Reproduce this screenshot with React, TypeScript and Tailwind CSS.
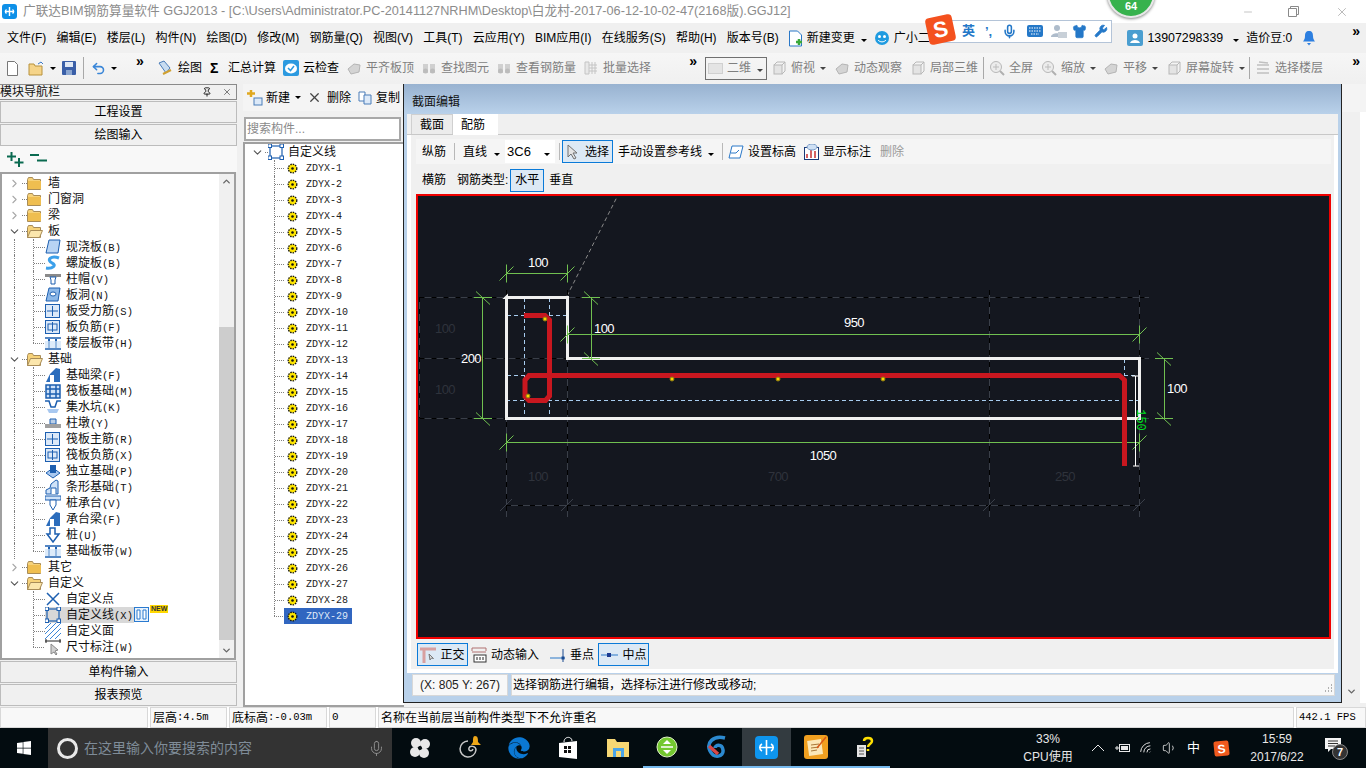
import { ChevronDown, ChevronRight, ChevronUp, Mic, Minus, Pin, Shirt, Undo2, Volume1, Wifi, Wrench, X } from "lucide-react";
import { FaEdge, FaWindows } from "react-icons/fa";
import type { ReactNode } from "react";

const Caret = () => <span className="mx-[5px] inline-block h-0 w-0 border-x-[3px] border-t-[3px] border-x-transparent border-t-black" />;

const CaretTight = () => <span className="mx-px inline-block h-0 w-0 border-x-[3px] border-t-[3px] border-x-transparent border-t-[#444]" />;

const More = () => <span className="text-[14px] leading-none font-bold tracking-[-1px] text-black">»</span>;

const Sep = () => <div className="h-[22px] w-px bg-[#a8a8a8]" />;

const menus = ["文件(F)", "编辑(E)", "楼层(L)", "构件(N)", "绘图(D)", "修改(M)", "钢筋量(Q)", "视图(V)", "工具(T)", "云应用(Y)", "BIM应用(I)", "在线服务(S)", "帮助(H)", "版本号(B)"];

const GrayIcon = ({ kind = 0 }: { kind?: number }) => (
  <svg width="16" height="16" viewBox="0 0 16 16" className="shrink-0">
    {kind === 0 && <path d="M2 9l6-5 6 1-1 7-8 2z" fill="#d4d4d4" stroke="#b4b4b4" />}
    {kind === 1 && <><circle cx="7" cy="7" r="5.5" fill="#ececec" stroke="#b8b8b8" /><path d="M11 11l4 4" stroke="#b0b0b0" strokeWidth="2" /><path d="M7 4v6M4 7h6" stroke="#bcbcbc" /></>}
    {kind === 2 && <><rect x="3" y="5" width="8" height="9" fill="#e4e4e4" stroke="#b8b8b8" /><path d="M3 5l3-3h8v9l-3 3M11 5l3-3" fill="none" stroke="#b8b8b8" /></>}
    {kind === 3 && <><path d="M2 4h5v9H2zM9 4h5v9H9z" fill="#d0d0d0" /><circle cx="4.5" cy="11" r="2.5" fill="#bcbcbc" /><circle cx="11.5" cy="11" r="2.5" fill="#bcbcbc" /></>}
    {kind === 4 && <path d="M2 2h4v12H2zM6 5h8M6 8h8M6 11h8M9 2v12M12 2v12" fill="#e8e8e8" stroke="#c4c4c4" />}
    {kind === 5 && <path d="M2 5h12M2 9h12M2 13h12M4 2l9 1" stroke="#c0c0c0" strokeWidth="1.6" />}
  </svg>
);

const ToolItem = ({ icon, label, caret }: { icon?: ReactNode; label: string; caret?: boolean }) => (
  <div className="flex items-center gap-1 whitespace-nowrap text-[#7f7f7f]">
    {icon}
    <span>{label}</span>
    {caret && <CaretTight />}
  </div>
);

const TitleBar = () => (
  <div className="flex h-[23px] items-center bg-white">
    <div className="ml-[2px] flex h-[15px] w-[15px] items-center justify-center rounded-[3px] bg-[#0e90e8]">
      <svg width="11" height="11" viewBox="0 0 11 11"><path d="M5.5 1v9M1 5.5h9M2.5 3.5C1 4.5 1 6.500 2.500 7.500M8.500 3.500C10 4.500 10 6.500 8.500 7.500" fill="none" stroke="#fff" strokeWidth="1.400" /></svg>
    </div>
    <span className="ml-[6px] text-[12.700px] whitespace-nowrap text-[#8c8c8c]">广联达BIM钢筋算量软件 GGJ2013 - [C:\Users\Administrator.PC-20141127NRHM\Desktop\白龙村-2017-06-12-10-02-47(2168版).GGJ12]</span>
    <div className="ml-auto flex items-center text-[#8a8a8a]">
      <Minus size={12} strokeWidth={1} className="mr-[34px]" />
      <svg width="11" height="11" viewBox="0 0 11 11" className="mr-[36px]"><path d="M.5 2.500h8v8h-8zM2.500 2.500v-2h8v8h-2" fill="none" stroke="#8a8a8a" /></svg>
      <X size={14} strokeWidth={1} className="mr-[17px]" />
    </div>
  </div>
);

const MenuBar = () => (
  <div className="flex h-[30px] items-center bg-[#f0f0f0] pl-[7px] text-black">
    <div className="flex gap-[10.200px] whitespace-nowrap">
      {menus.map((m) => <span key={m}>{m}</span>)}
    </div>
    <svg width="15" height="17" viewBox="0 0 15 17" className="ml-[9px]">
      <path d="M1.500 1h8l4 4v11h-12z" fill="#fff" stroke="#2a78c8" />
      <path d="M8 12h6M11 9v6" stroke="#3aa83a" strokeWidth="2.500" />
    </svg>
    <span className="ml-1">新建变更</span>
    <span className="ml-px"><Caret /></span>
    <svg width="16" height="16" viewBox="0 0 16 16" className="ml-[2px]">
      <circle cx="8" cy="8" r="7" fill="#1f9be0" />
      <circle cx="5.500" cy="6.500" r="1.500" fill="#fff" />
      <circle cx="10.500" cy="6.500" r="1.500" fill="#fff" />
      <path d="M4 10c2 2.500 6 2.500 8 0" fill="none" stroke="#fff" />
    </svg>
    <span className="ml-1">广小二</span>
    <div className="ml-auto flex items-center">
      <div className="flex h-[16px] w-[16px] items-center justify-center rounded-[2px] bg-[#4a9ed0]">
        <svg width="12" height="12" viewBox="0 0 12 12"><circle cx="6" cy="4" r="2.500" fill="#fff" /><path d="M1 11c1-4 9-4 10 0z" fill="#fff" /></svg>
      </div>
      <span className="ml-1 text-[12.400px]">13907298339</span>
      <span className="ml-[5px]"><Caret /></span>
      <span className="ml-[2px]">造价豆:0</span>
      <svg width="14" height="16" viewBox="0 0 14 16" className="ml-[10px]">
        <path d="M7 1c3 0 4 2 4 5 0 3 1 4 2 5.500H1C2 10 3 9 3 6c0-3 1-5 4-5z" fill="#2d7fe0" />
        <path d="M5 13h4l-2 2.500z" fill="#2d7fe0" />
      </svg>
      <span className="mr-[7px] ml-9 -mt-3"><More /></span>
    </div>
  </div>
);

const ToolBar = () => (
  <div className="flex h-[30px] items-center bg-gradient-to-b from-[#f6f6f6] to-[#f0f0f0] text-black">
    <div className="flex w-[152px] items-center pl-[6px]">
      <svg width="13" height="15" viewBox="0 0 13 15"><path d="M1.500.5h7l3 3v11h-10z" fill="#fff" stroke="#777" /></svg>
      <svg width="17" height="15" viewBox="0 0 17 15" className="ml-[9px]"><path d="M1 3h5l1 2h7v9H1z" fill="#f5d48a" stroke="#b8923c" /><path d="M10 3l3-2 2 2" fill="none" stroke="#3a78c8" /></svg>
      <Caret />
      <svg width="14" height="14" viewBox="0 0 14 14" className="ml-[1px]"><rect width="14" height="14" rx="1" fill="#3a5fa8" /><rect x="3" y="1" width="8" height="5" fill="#dfe8f5" /><rect x="4" y="9" width="6" height="5" fill="#8ba6d0" /></svg>
      <div className="mx-[7px]"><Sep /></div>
      <Undo2 size={15} strokeWidth={2.500} className="text-[#3a86d8]" />
      <Caret />
      <span className="ml-[14px] -mt-3"><More /></span>
    </div>
    <div className="flex w-[552px] items-center gap-[7px] pl-[5px]">
      <div className="flex items-center gap-[5px] whitespace-nowrap">
        <svg width="16" height="16" viewBox="0 0 16 16"><path d="M2 3l5-2 6 7-4 5z" fill="#c8dcf0" stroke="#4a7cb8" /><path d="M6 14l8-4" stroke="#d0a030" strokeWidth="2" /></svg>
        <span>绘图</span>
      </div>
      <div className="ml-[1px] flex items-center gap-2 whitespace-nowrap">
        <span className="w-[10px] text-[14px] leading-none font-bold">Σ</span>
        <span>汇总计算</span>
      </div>
      <div className="flex items-center gap-1 whitespace-nowrap">
        <svg width="16" height="16" viewBox="0 0 16 16"><rect width="16" height="16" rx="2" fill="#2c9ae0" /><ellipse cx="8" cy="8.500" rx="6" ry="5" fill="#fff" /><path d="M5 8l2.500 2.500L11 6" fill="none" stroke="#2c9ae0" strokeWidth="1.500" /></svg>
        <span>云检查</span>
      </div>
      <ToolItem icon={<GrayIcon />} label="平齐板顶" />
      <ToolItem icon={<GrayIcon kind={3} />} label="查找图元" />
      <ToolItem icon={<GrayIcon kind={3} />} label="查看钢筋量" />
      <ToolItem icon={<GrayIcon kind={4} />} label="批量选择" />
      <span className="ml-auto mr-[8px] -mt-3"><More /></span>
    </div>
    <div className="flex flex-1 items-center pl-[1px]">
      <div className="flex h-[23px] w-[62px] items-center whitespace-nowrap border border-[#707070] pl-[2px] text-[#7f7f7f]">
        <div className="mr-1 h-[11px] w-[15px] shrink-0 border border-[#d0d0d0] bg-[#e4e4e4]" />
        <span>二维</span>
        <span className="ml-[5px]"><CaretTight /></span>
      </div>
      <div className="ml-[4px]"><ToolItem icon={<GrayIcon kind={2} />} label="俯视" caret /></div>
      <div className="ml-[7px]"><ToolItem icon={<GrayIcon />} label="动态观察" /></div>
      <div className="ml-2"><ToolItem icon={<GrayIcon kind={2} />} label="局部三维" /></div>
      <div className="mx-[5px]"><Sep /></div>
      <ToolItem icon={<GrayIcon kind={1} />} label="全屏" />
      <div className="ml-2"><ToolItem icon={<GrayIcon kind={1} />} label="缩放" caret /></div>
      <div className="ml-[6px]"><ToolItem icon={<GrayIcon />} label="平移" caret /></div>
      <div className="ml-[7px]"><ToolItem icon={<GrayIcon kind={2} />} label="屏幕旋转" caret /></div>
      <div className="ml-[3px]"><Sep /></div>
      <div className="ml-[5px]"><ToolItem icon={<GrayIcon kind={5} />} label="选择楼层" /></div>
      <span className="mr-[7px] ml-auto -mt-3"><More /></span>
    </div>
  </div>
);

const ChevronClosed = () => <ChevronRight size={13} strokeWidth={2} className="text-[#a8a8a8]" />;
const ChevronOpen = () => <ChevronDown size={13} strokeWidth={2} className="text-[#555]" />;

const Folder = ({ open }: { open?: boolean }) => (
  <svg width="16" height="13" viewBox="0 0 16 13" className="shrink-0">
    <path d="M.5 2.500l1-2h4l1 2h7v10H.5z" fill="#f6d27a" stroke="#a88c58" />
    {open ? <path d="M.5 12.500l3-7h12l-3 7z" fill="#fbe6ac" stroke="#a88c58" /> : <rect x="1" y="4" width="13" height="8" fill="#efbe50" />}
  </svg>
);

const BLUE = "#1d5fb0";

const TreeIcon = ({ v }: { v: string }) => (
  <svg width="16" height="16" viewBox="0 0 16 16" className="shrink-0">
    {v === "plate" && <path d="M4 1h11l-2 13H1z" fill="#b8d4f4" stroke={BLUE} />}
    {v === "spiral" && <path d="M14 3C6 0 1 5 7 8c5 2 1 6-6 5" fill="none" stroke="#3ca0ea" strokeWidth="3" />}
    {v === "cap" && <><rect x="0" y="3" width="16" height="3" fill="#8a8a8a" /><path d="M5 6h6l-1 3v4H6V9z" fill="#fff" stroke={BLUE} /></>}
    {v === "hole" && <><path d="M4 1h11l-2 13H1z" fill="#8cb8e8" stroke={BLUE} /><ellipse cx="8" cy="7" rx="3" ry="2" fill="#fff" stroke={BLUE} /></>}
    {v === "mesh" && <><rect x=".5" y="1.500" width="14" height="13" fill="#dce9f8" stroke={BLUE} /><path d="M2 8h11M7.500 3v10" stroke={BLUE} /></>}
    {v === "mesh2" && <><rect x=".5" y="1.500" width="14" height="13" fill="#dce9f8" stroke={BLUE} /><rect x="3" y="5" width="9" height="6" fill="none" stroke={BLUE} /><path d="M7.500 3v10" stroke={BLUE} /></>}
    {v === "band" && <><path d="M0 3h16M0 14h16" stroke={BLUE} strokeWidth="1.500" /><path d="M4 4v9M11 4v9" stroke={BLUE} strokeWidth="2" /><rect x="0" y="6" width="16" height="7" fill="#cfe2f8" opacity=".7" /></>}
    {v === "beam" && <><path d="M1 15l4-8 6-6 4 1v13z" fill="#2c6dbc" /><path d="M5 8h4v7H5z" fill="#fff" /></>}
    {v === "raft" && <path d="M1 2h14v13H1zM1 6h14M1 11h14M5 2v13M11 2v13" fill="#cfe2f8" stroke={BLUE} strokeWidth="1.500" />}
    {v === "pit" && <><path d="M0 2h4l2 6h4l2-6h4" fill="none" stroke={BLUE} strokeWidth="1.500" /><path d="M2 10h12l-2 4H4z" fill="#a8c8f0" /></>}
    {v === "pier" && <><path d="M5 4h6v5H5z" fill="#bcd0e8" stroke={BLUE} /><rect x="0" y="9" width="16" height="4" fill="#a0a0a0" /></>}
    {v === "found" && <><path d="M1 10l7-5 7 5-7 5z" fill="#a8c8f0" stroke={BLUE} /><path d="M5 2h6v8H5z" fill={BLUE} /></>}
    {v === "strip" && <><path d="M1 15V11l4-2 1-4 5-4 2 1v13z" fill="#cfe2f8" stroke={BLUE} /><path d="M6 15V9h5v6" fill="#fff" stroke={BLUE} /></>}
    {v === "pile" && <><rect x="0" y="1" width="16" height="4" fill="#cfe2f8" stroke={BLUE} /><path d="M5 5h6v5l-3 5-3-5z" fill="#fff" stroke={BLUE} /></>}
    {v === "pile2" && <path d="M5 1h5v6h4l-6 8-6-8h3z" fill="#fff" stroke={BLUE} strokeWidth="1.500" />}
    {v === "point" && <path d="M2 2l12 12M14 2L2 14" stroke={BLUE} strokeWidth="1.500" />}
    {v === "line" && <><rect x="2" y="2" width="12" height="12" fill="none" stroke={BLUE} strokeWidth="1.200" />{[[0, 0], [12, 0], [0, 12], [12, 12]].map(([x, y]) => <rect key={`${x}${y}`} x={x} y={y} width="3.500" height="3.500" fill="#fff" stroke={BLUE} />)}</>}
    {v === "hatch" && <path d="M0 6l6-6M0 11L11 0M0 16L16 0M5 16L16 5M10 16l6-6" stroke="#3a86d8" />}
    {v === "dim" && <><path d="M0 2h16M1 0v4M15 0v4" stroke="#222" /><path d="M6 5v10l3-2 2 3 1-1-2-3 3-1z" fill="#d0d0d0" stroke="#888" /></>}
  </svg>
);

const Dotted = "border-[#808080] border-dotted";

const Guides = ({ last, outer = true }: { last?: boolean; outer?: boolean }) => (
  <div className="flex h-full shrink-0">
    <div className={`ml-[12px] h-full w-[19px] ${outer ? `border-l ${Dotted}` : ""}`} />
    <div className={`relative h-full w-[12px] ${last ? "" : `border-l ${Dotted}`}`}>
      {last && <div className={`h-1/2 border-l ${Dotted}`} />}
      <div className={`absolute top-1/2 left-0 w-[11px] border-t ${Dotted}`} />
    </div>
  </div>
);

const Group = ({ name, open }: { name: string; open?: boolean }) => (
  <div className="flex h-4 items-center pl-[6px]">
    {open ? <ChevronOpen /> : <ChevronClosed />}
    <div className={`ml-[1px] w-[5px] border-t ${Dotted}`} />
    <Folder open={open} />
    <span className="ml-[5px]">{name}</span>
  </div>
);

const Leaf = ({ name, k, v, last, outer, extra, selected }: { name: string; k?: string; v: string; last?: boolean; outer?: boolean; extra?: ReactNode; selected?: boolean }) => (
  <div className="flex h-4 items-center">
    <Guides last={last} outer={outer} />
    <div className={`flex h-4 items-center gap-1 pr-[1px] ${selected ? "bg-[#d8d8d8]" : ""}`}>
      <TreeIcon v={v} />
      <span className="ml-[1px] whitespace-nowrap">
        {name}
        {k && <span className="font-['Liberation_Mono',monospace] text-[10.500px]">({k})</span>}
      </span>
    </div>
    {extra}
  </div>
);

const slabs: [string, string, string][] = [["现浇板", "B", "plate"], ["螺旋板", "B", "spiral"], ["柱帽", "V", "cap"], ["板洞", "N", "hole"], ["板受力筋", "S", "mesh"], ["板负筋", "F", "mesh2"], ["楼层板带", "H", "band"]];
const founds: [string, string, string][] = [["基础梁", "F", "beam"], ["筏板基础", "M", "raft"], ["集水坑", "K", "pit"], ["柱墩", "Y", "pier"], ["筏板主筋", "R", "mesh"], ["筏板负筋", "X", "mesh2"], ["独立基础", "P", "found"], ["条形基础", "T", "strip"], ["桩承台", "V", "pile"], ["承台梁", "F", "beam"], ["桩", "U", "pile2"], ["基础板带", "W", "band"]];

const NavButton = ({ label }: { label: string }) => (
  <div className="flex h-[22px] items-center justify-center border border-[#bcbcbc] bg-[#f0f0f0] text-black">{label}</div>
);

const NavPanel = () => (
  <div className="flex w-[237px] shrink-0 flex-col">
    <div className="flex h-[16px] items-center justify-between border-y border-r border-[#8a8a8a] bg-[#f0f0f0] pr-1 text-[#111]">
      <span>模块导航栏</span>
      <div className="flex items-center gap-[10px]">
        <Pin size={10} strokeWidth={2} className="text-black" />
        <X size={10} strokeWidth={1.500} className="text-[#333]" />
      </div>
    </div>
    <div className="mt-[1px] flex flex-col gap-px">
      <NavButton label="工程设置" />
      <NavButton label="绘图输入" />
    </div>
    <div className="flex h-[26px] items-center gap-[6px] bg-[#f8f8f8] pl-[7px]">
      <svg width="17" height="15" viewBox="0 0 17 15"><path d="M4.500 0v9M0 4.500h9M12 6v9M7.500 10.500h9" stroke="#0a6a50" strokeWidth="2" /></svg>
      <svg width="17" height="15" viewBox="0 0 17 15"><path d="M0 3h9M7 8.500h10" stroke="#0a6a50" strokeWidth="2" /></svg>
    </div>
    <div className="mr-px flex h-[488px] border-2 border-[#a0a0a0] bg-white text-[#111]">
      <div className="min-w-0 flex-1 pt-[1px]">
        {["墙", "门窗洞", "梁"].map((g) => <Group key={g} name={g} />)}
        <Group name="板" open />
        {slabs.map(([n, k, v], i) => <Leaf key={n} name={n} k={k} v={v} last={i === slabs.length - 1} />)}
        <Group name="基础" open />
        {founds.map(([n, k, v], i) => <Leaf key={n + k} name={n} k={k} v={v} last={i === founds.length - 1} />)}
        <Group name="其它" />
        <Group name="自定义" open />
        <Leaf name="自定义点" v="point" outer={false} />
        <Leaf
          name="自定义线"
          k="X"
          v="line"
          outer={false}
          selected
          extra={
            <div className="flex h-4 items-start">
              <svg width="15" height="15" viewBox="0 0 15 15"><rect x=".5" y=".5" width="14" height="14" fill="#e8f2fc" stroke="#2a7ad0" /><path d="M3 3v9h3V3zM9 3v9h3V3z" fill="#fff" stroke="#2a7ad0" /></svg>
              <span className="-mt-[2px] ml-[1px] bg-[#ffd800] px-[1px] text-[7px] leading-[8px] font-bold text-[#333]">NEW</span>
            </div>
          }
        />
        <Leaf name="自定义面" v="hatch" outer={false} />
        <Leaf name="尺寸标注" k="W" v="dim" outer={false} last />
      </div>
      <div className="flex w-[15px] shrink-0 flex-col bg-[#f0f0f0]">
        <div className="flex h-[15px] items-center justify-center"><ChevronUp size={11} strokeWidth={3} className="text-[#666]" /></div>
        <div className="mt-[138px] h-[313px] bg-[#cdcdcd]" />
        <div className="mt-auto flex h-[15px] items-center justify-center"><ChevronDown size={11} strokeWidth={3} className="text-[#666]" /></div>
      </div>
    </div>
    <div className="mt-[1px] flex flex-col gap-px">
      <NavButton label="单构件输入" />
      <NavButton label="报表预览" />
    </div>
  </div>
);

const Gear = () => (
  <svg width="11" height="11" viewBox="0 0 11 11" className="shrink-0">
    <circle cx="5.500" cy="5.500" r="4.300" fill="#ffe600" stroke="#111" strokeWidth="1.300" strokeDasharray="1.500 1" />
    <circle cx="5.500" cy="5.500" r="1.300" fill="#111" />
  </svg>
);

const CompPanel = () => (
  <div className="ml-[6px] flex w-[161px] shrink-0 flex-col">
    <div className="flex h-[27px] items-center bg-[#f4f4f4] text-black">
      <svg width="16" height="16" viewBox="0 0 16 16" className="ml-[4px]"><path d="M4 0v7M0 3.500h8" stroke="#e0a820" strokeWidth="2.500" /><rect x="7" y="8" width="8" height="7" fill="#dce9f8" stroke="#4a7cb8" /></svg>
      <span className="ml-[3px]">新建</span>
      <Caret />
      <X size={15} strokeWidth={2} className="ml-[1px] text-[#444]" />
      <span className="ml-[5px]">删除</span>
      <svg width="14" height="14" viewBox="0 0 14 14" className="ml-[7px]"><path d="M1 1h6v9H1z" fill="#fff" stroke="#4a7cb8" /><path d="M6 4h7v9H6z" fill="#dce9f8" stroke="#4a7cb8" /></svg>
      <span className="ml-1">复制</span>
    </div>
    <div className="mt-[6px] ml-[1px] flex h-[24px] w-[157px] items-center border-2 border-[#a8a8a8] bg-white pl-[1px] text-[#8a8a8a]">搜索构件...</div>
    <div className="mt-[1px] flex-1 border-2 border-r-0 border-[#a0a0a0] bg-white">
      <div className="flex h-4 items-center pl-[6px]">
        <ChevronOpen />
        <div className={`ml-[1px] w-[3px] border-t ${Dotted}`} />
        <TreeIcon v="line" />
        <span className="ml-[4px] text-[#111]">自定义线</span>
      </div>
      {Array.from({ length: 29 }, (_, i) => i + 1).map((n) => (
        <div key={n} className="flex h-4 items-center">
          <div className={`relative ml-[29px] h-full w-[10px] shrink-0 ${n === 29 ? "" : `border-l ${Dotted}`}`}>
            {n === 29 && <div className={`h-1/2 border-l ${Dotted}`} />}
            <div className={`absolute top-1/2 left-0 w-[9px] border-t ${Dotted}`} />
          </div>
          <div className={`flex h-4 items-center pr-1 pl-[3px] font-['Liberation_Mono',monospace] text-[10px] ${n === 29 ? "bg-[#3166c0] text-[#dfe8f8]" : "text-[#222]"}`}>
            <Gear />
            <span className="ml-[8px]">ZDYX-{n}</span>
          </div>
        </div>
      ))}
    </div>
  </div>
);

const Active = ({ children, w }: { children: ReactNode; w: string }) => (
  <div className={`flex h-[23px] items-center justify-center border border-[#0a7ad8] bg-[#dce9f5] ${w}`}>{children}</div>
);

const DIM = "#70c050";
const Hd = ({ x1, x2, y }: { x1: number; x2: number; y: number }) => <line x1={x1} x2={x2} y1={y} y2={y} stroke={DIM} />;
const Tick = ({ x, y, v }: { x: number; y: number; v?: boolean }) =>
  v ? (
    <g stroke={DIM}>
      <line x1={x} x2={x} y1={y - 9} y2={y + 9} />
      <line x1={x - 7} x2={x + 7} y1={y + 7} y2={y - 7} />
    </g>
  ) : (
    <g stroke={DIM}>
      <line x1={x - 9} x2={x + 9} y1={y} y2={y} />
      <line x1={x - 7} x2={x + 7} y1={y - 6} y2={y + 7} />
    </g>
  );

const Axis = ({ x1, y1, x2, y2 }: { x1: number; y1: number; x2: number; y2: number }) => (
  <g>
    <line x1={x1} y1={y1} x2={x2} y2={y2} stroke="#3a3f49" />
    <line x1={x1} y1={y1} x2={x2} y2={y2} stroke="#000" strokeDasharray="5 7" />
  </g>
);

const Helper = ({ x1, y1, x2, y2 }: { x1: number; y1: number; x2: number; y2: number }) => (
  <line x1={x1} y1={y1} x2={x2} y2={y2} stroke="#a8cdf0" strokeDasharray="4 3" />
);

const Label = ({ x, y, t, c = "#fff" }: { x: number; y: number; t: string; c?: string }) => (
  <text x={x} y={y} fill={c} textAnchor="middle" dominantBaseline="central" fontSize="13" letterSpacing="-.6" fontFamily="Liberation Sans, sans-serif">{t}</text>
);

const Drawing = () => (
  <svg viewBox="419 196 911 441" className="block h-full w-full">
    <line x1="568" y1="296" x2="618" y2="197" stroke="#8a8a8a" strokeDasharray="4 3" />
    <Axis x1={420.500} y1={297.500} x2={1150} y2={297.500} />
    <Axis x1={420.500} y1={358.500} x2={1150} y2={358.500} />
    <Axis x1={420.500} y1={418.500} x2={1150} y2={418.500} />
    <Axis x1={420.500} y1={297} x2={420.500} y2={418} />
    <Axis x1={507.500} y1={290} x2={507.500} y2={517} />
    <Axis x1={568.500} y1={290} x2={568.500} y2={517} />
    <Axis x1={990.500} y1={290} x2={990.500} y2={517} />
    <Axis x1={1140.500} y1={290} x2={1140.500} y2={517} />
    <Axis x1={507} y1={505.500} x2={1140} y2={505.500} />
    <g stroke="#3a3f49">
      {[507, 568, 990, 1140].map((x) => <line key={x} x1={x - 6} y1={511} x2={x + 6} y2={499} />)}
    </g>

    <Helper x1={525.500} y1={298} x2={525.500} y2={417} />
    <Helper x1={550.500} y1={298} x2={550.500} y2={417} />
    <Helper x1={508} y1={315.500} x2={568} y2={315.500} />
    <Helper x1={508} y1={375.500} x2={526} y2={375.500} />
    <Helper x1={507} y1={400.500} x2={1140} y2={400.500} />
    <Helper x1={1125.500} y1={359} x2={1125.500} y2={375} />
    <Helper x1={1125} y1={375.500} x2={1136} y2={375.500} />

    <path d="M507 297.500H568.500V358.500H1140.500V418.500H507.500V297z" fill="none" stroke="#f0f0f0" strokeWidth="3" />

    <Hd x1={507} x2={568} y={273.500} />
    <Tick x={507.500} y={273.500} v />
    <Tick x={568.500} y={273.500} v />
    <line x1={483.500} x2={483.500} y1={297} y2={418} stroke={DIM} />
    <Tick x={484} y={297.500} />
    <Tick x={484} y={418.500} />
    <line x1={592.500} x2={592.500} y1={297} y2={358} stroke={DIM} />
    <Tick x={592} y={297.500} />
    <Tick x={592} y={358.500} />
    <Hd x1={568} x2={1140} y={334.500} />
    <Tick x={568.500} y={334.500} v />
    <Tick x={1140.500} y={334.500} v />
    <Hd x1={507} x2={1140} y={442.500} />
    <Tick x={507.500} y={442.500} v />
    <Tick x={1140.500} y={442.500} v />
    <line x1={1165.500} x2={1165.500} y1={358} y2={418} stroke={DIM} />
    <Tick x={1165} y={358.500} />
    <Tick x={1165} y={418.500} />

    <path d="M525 315.500H546L550.500 320V396L546.500 400.500H530L526 396.500V380L530 375.500H1120.500L1125.500 380V466" fill="none" stroke="#c8171f" strokeWidth="5" />
    {[[546, 319], [529, 396], [673, 379], [779, 379], [884, 379]].map(([x, y]) => (
      <circle key={x} cx={x} cy={y} r="2" fill="#ffd400" stroke="#8a7a10" />
    ))}

    <line x1={1136.500} x2={1136.500} y1={376} y2={466} stroke="#fff" />
    <path d="M1133 376h6M1134 466h6" stroke="#fff" />

    <Label x={539} y={262} t="100" />
    <Label x={472} y={358} t="200" />
    <Label x={605} y={328} t="100" />
    <Label x={855} y={322} t="950" />
    <Label x={1178} y={388} t="100" />
    <Label x={824} y={455} t="1050" />
    <Label x={446} y={328} t="100" c="#2f333c" />
    <Label x={446} y={389} t="100" c="#2f333c" />
    <Label x={539} y={476} t="100" c="#2f333c" />
    <Label x={779} y={476} t="700" c="#2f333c" />
    <Label x={1066} y={476} t="250" c="#2f333c" />
    <text x={1141} y={420} fill="#00e020" textAnchor="middle" dominantBaseline="central" fontSize="12" fontFamily="Liberation Mono, monospace" transform="rotate(90 1141 420)">150</text>
  </svg>
);

const Dialog = () => (
  <div className="ml-[-1px] flex h-[619px] w-[939px] shrink-0 flex-col border-r border-b border-l border-[#222] bg-[#b9d1ea]">
    <div className="flex h-[30px] items-center bg-gradient-to-b from-[#98b2d0] to-[#b9d1ea] pt-[6px] pl-[8px] text-[#111]">截面编辑</div>
    <div className="mx-[3px] flex flex-col">
      <div className="flex h-[21px] items-end border-b border-[#c8c8c8] bg-[#f0f0f0] pl-[4px] text-black">
        <div className="flex h-[20px] w-[42px] items-center justify-center border border-b-0 border-[#d0d0d0] bg-[#ececec]">截面</div>
        <div className="-mb-px flex h-[21px] w-[45px] items-center justify-center bg-white pr-[5px]">配筋</div>
      </div>
    </div>
    <div className="mx-[3px] h-[538px] shrink-0 border-x-[4px] border-b-[4px] border-white bg-[#f0f0f0] pt-[4px] pr-[3px] pl-[5px] text-black">
      <div className="flex h-[25px] items-center bg-[#f5f5f5] pl-[6px]">
        <span>纵筋</span>
        <div className="mx-[8px] h-[17px] w-px bg-[#b8b8b8]" />
        <span>直线</span>
        <span className="ml-[2px]"><Caret /></span>
        <div className="flex h-[23px] w-[50px] items-center bg-white pl-[2px] text-[12px]">
          <span className="font-['Liberation_Sans',sans-serif] text-[13px]">3C6</span>
          <span className="ml-auto"><Caret /></span>
        </div>
        <div className="mr-[2px] ml-[4px] h-[17px] w-px bg-[#b8b8b8]" />
        <Active w="w-[51px]">
          <svg width="14" height="16" viewBox="0 0 14 16" className="mr-[5px]"><path d="M2 1v12l3-3 3 5 2-1-3-5h4z" fill="#e4e4e4" stroke="#707070" /></svg>
          选择
        </Active>
        <span className="ml-[5px]">手动设置参考线</span>
        <span className="ml-[1px]"><Caret /></span>
        <div className="mr-[5px] ml-[3px] h-[17px] w-px bg-[#b8b8b8]" />
        <svg width="16" height="14" viewBox="0 0 16 14"><path d="M4 1h11l-3 12H1z" fill="#fff" stroke="#2a78c8" /><path d="M3 8h5l3-3" fill="none" stroke="#2a78c8" /></svg>
        <span className="ml-1">设置标高</span>
        <svg width="15" height="16" viewBox="0 0 15 16" className="ml-[8px]"><rect x=".5" y="3.500" width="14" height="12" fill="#fff" stroke="#1a3a78" /><path d="M3 14v-4M7 14V6M11 14v-7" stroke="#c83030" strokeWidth="1.500" /><ellipse cx="8" cy="3" rx="5" ry="3" fill="#cfe0f4" stroke="#7a9cc8" /></svg>
        <span className="ml-1">显示标注</span>
        <span className="ml-[9px] text-[#9a9a9a]">删除</span>
      </div>
      <div className="mt-[4px] flex h-[24px] items-center pl-[6px]">
        <span>横筋</span>
        <span className="ml-[11px]">钢筋类型:</span>
        <div className="ml-[2px]"><Active w="w-[34px]">水平</Active></div>
        <span className="ml-[5px]">垂直</span>
      </div>
      <div className="mt-[2px] h-[445px] border-2 border-[#f00000] bg-[#14171f]">
        <Drawing />
      </div>
      <div className="mt-[3px] flex h-[25px] items-center pl-[1px]">
        <Active w="w-[51px]">
          <svg width="17" height="16" viewBox="0 0 17 16" className="mr-[3px]"><path d="M0 2h16M4 2v14" stroke="#d8a0a0" strokeWidth="3" /><path d="M9 7l1 6 1.500-2 2 .5z" fill="#ddd" stroke="#777" /></svg>
          正交
        </Active>
        <div className="ml-[3px] flex items-center gap-[3px]">
          <svg width="17" height="16" viewBox="0 0 17 16"><path d="M1 1h14M1 1v3M15 1v3M1 5h14" stroke="#b07070" /><rect x="3" y="8" width="12" height="7" fill="#fff" stroke="#333" /><path d="M6 10v3M9 10v3M12 10v3" stroke="#222" /></svg>
          <span>动态输入</span>
        </div>
        <div className="ml-[11px] flex items-center gap-[4px]">
          <svg width="16" height="14" viewBox="0 0 16 14"><path d="M0 10h15" stroke="#2a78c8" /><path d="M13 1v13" stroke="#1a4a90" /><rect x="11.500" y="8.500" width="3" height="3" fill="#1a4a90" /></svg>
          <span>垂点</span>
        </div>
        <div className="ml-[4px]">
          <Active w="w-[51px]">
            <svg width="17" height="6" viewBox="0 0 17 6" className="mr-[5px]"><path d="M0 3h17" stroke="#2a78c8" /><rect x="6" y="1" width="4" height="4" fill="#1a3a90" /></svg>
            中点
          </Active>
        </div>
      </div>
    </div>
    <div className="mt-[1px] mr-[6px] ml-[8px] flex h-[22px] gap-[3px] text-black">
      <div className="flex w-[96px] items-center justify-center border border-[#d8d8d8] bg-[#f8f8f8] text-[#222]">(X: 805 Y: 267)</div>
      <div className="relative flex flex-1 items-center border border-[#d8d8d8] bg-[#f8f8f8] pl-[1px]">
        选择钢筋进行编辑，选择标注进行修改或移动;
        <svg width="10" height="10" viewBox="0 0 10 10" className="absolute right-[1px] bottom-[1px]"><path d="M8 1h1M5 4h1M8 4h1M2 7h1M5 7h1M8 7h1" stroke="#b0b0b0" strokeWidth="2" /></svg>
      </div>
    </div>
  </div>
);

const StatusCell = ({ children, w }: { children?: ReactNode; w: string }) => (
  <div className={`flex h-full items-center border border-[#d8d8d8] bg-[#f8f8f8] pl-[2px] ${w}`}>{children}</div>
);

const StatusBar = () => (
  <div className="flex h-[21px] gap-[2px] bg-white text-black">
    <StatusCell w="w-[148px]" />
    <StatusCell w="w-[77px]">层高<span className="font-['Liberation_Mono',monospace] text-[10.500px]">:4.5m</span></StatusCell>
    <StatusCell w="w-[98px]">底标高<span className="font-['Liberation_Mono',monospace] text-[10.500px]">:-0.03m</span></StatusCell>
    <StatusCell w="w-[47px]"><span className="font-['Liberation_Mono',monospace] text-[11px]">0</span></StatusCell>
    <StatusCell w="flex-1">名称在当前层当前构件类型下不允许重名</StatusCell>
    <StatusCell w="w-[70px]"><span className="font-['Liberation_Mono',monospace] text-[10.500px]">442.1 FPS</span></StatusCell>
  </div>
);

const TaskCell = ({ children, under, active }: { children: ReactNode; under?: boolean; active?: boolean }) => (
  <div className={`flex h-full w-[49.500px] shrink-0 items-center justify-center ${active ? "bg-[#333b40]" : ""} ${under ? "border-b-2 border-[#76b9ed]" : ""}`}>{children}</div>
);

const TaskBar = () => (
  <div className="flex h-[40px] items-center bg-[#030c10] text-white">
    <div className="flex w-[48px] items-center justify-center"><FaWindows size={16} /></div>
    <div className="flex h-full w-[344px] items-center bg-[#333333] pl-[9px] text-[#7f8c98]">
      <div className="h-[21px] w-[21px] rounded-full border-[3px] border-[#e8e8e8]" />
      <span className="ml-[6px] text-[14px]">在这里输入你要搜索的内容</span>
      <Mic size={17} strokeWidth={1.200} className="mr-[7px] ml-auto text-[#999]" />
    </div>
    <div className="ml-[3px] flex h-full">
      <TaskCell>
        <svg width="22" height="22" viewBox="0 0 22 22"><g fill="#e8e8e8"><ellipse cx="7" cy="6" rx="5" ry="5" /><ellipse cx="16" cy="7" rx="5" ry="5" /><ellipse cx="15" cy="16" rx="5" ry="5" /><ellipse cx="6" cy="15" rx="5" ry="5" /></g><circle cx="11" cy="11" r="2" fill="#030c10" /></svg>
      </TaskCell>
      <TaskCell>
        <svg width="28" height="26" viewBox="0 0 28 26"><path d="M13 6a8 8 0 1 0 8 9c0-4-6-5-7-2s3 4 4 1" fill="none" stroke="#c8c8c8" strokeWidth="1.500" /><path d="M20 1c3 0 3 3 3 6l3 3H16l2-3c0-3 0-6 2-6z" fill="#f0a818" /></svg>
      </TaskCell>
      <TaskCell><FaEdge size={22} className="text-[#0b78d4]" /></TaskCell>
      <TaskCell>
        <svg width="22" height="24" viewBox="0 0 22 24"><path d="M2 7l18-2v18L2 21z" fill="#fff" /><path d="M7 6c0-6 8-6 8-1" fill="none" stroke="#fff" /><path d="M7 10h3v3H7zM11 10h3v3h-3zM7 14h3v3H7zM11 14h3v3h-3z" fill="#111" /></svg>
      </TaskCell>
      <TaskCell>
        <svg width="24" height="20" viewBox="0 0 24 20"><path d="M1 1h8l2 3h12v15H1z" fill="#f6d774" /><rect x="7" y="10" width="11" height="9" fill="#4aa4e8" /><rect x="10" y="13" width="5" height="6" fill="#f6d774" /></svg>
      </TaskCell>
      <TaskCell under>
        <svg width="22" height="22" viewBox="0 0 22 22"><circle cx="11" cy="11" r="10" fill="#74c830" stroke="#dff0c8" /><path d="M11 4l4 4H7zM11 18l4-4H7z" fill="#fff" /><path d="M5 11h12" stroke="#fff" strokeWidth="1.500" /></svg>
      </TaskCell>
      <TaskCell under>
        <svg width="24" height="24" viewBox="0 0 24 24"><path d="M20 3C8 0 1 8 5 16s14 6 13-1-8-5-8-2" fill="none" stroke="#2c8ad0" strokeWidth="3.500" /><path d="M4 11l9 8" stroke="#d84848" strokeWidth="3.500" /></svg>
      </TaskCell>
      <TaskCell under active>
        <div className="flex h-[23px] w-[23px] items-center justify-center rounded-[4px] bg-[#0e95ee]">
          <svg width="17" height="17" viewBox="0 0 17 17"><path d="M8.500 1v15M2 8.500h13M4 5C1 6.500 1 10.500 4 12M13 5c3 1.500 3 5.500 0 7" fill="none" stroke="#fff" strokeWidth="1.600" /></svg>
        </div>
      </TaskCell>
      <TaskCell under>
        <svg width="24" height="24" viewBox="0 0 24 24"><rect width="24" height="24" rx="3" fill="#f0a020" /><rect x="4" y="5" width="14" height="15" fill="#fbe8b8" transform="rotate(-8 11 12)" /><path d="M7 10l8-1M7 13l8-1M7 16l6-1" stroke="#a87838" /><path d="M13 13l9-11" stroke="#d85818" strokeWidth="1.500" /></svg>
      </TaskCell>
      <TaskCell under>
        <svg width="22" height="22" viewBox="0 0 22 22"><rect x="3" y="9" width="9" height="12" fill="#e4e4e4" /><path d="M5 12h5M5 15h5M5 18h5" stroke="#555" /><path d="M10 5c0-4 8-4 8 0 0 3-4 3-4 6M14 13v2" fill="none" stroke="#ffe000" strokeWidth="2.500" /></svg>
      </TaskCell>
    </div>
    <div className="ml-auto flex items-center">
      <div className="flex w-[70px] flex-col items-center text-[12px] leading-[18px] text-[#e8e8e8]">
        <span>33%</span>
        <span>CPU使用</span>
      </div>
      <svg width="14" height="8" viewBox="0 0 14 8" className="ml-[8px]"><path d="M1 7l6-6 6 6" fill="none" stroke="#e8e8e8" /></svg>
      <svg width="16" height="10" viewBox="0 0 16 10" className="ml-[10px]"><rect x="4.500" y="1.500" width="10" height="7" fill="none" stroke="#e8e8e8" /><rect x="6" y="3" width="7" height="4" fill="#e8e8e8" /><path d="M0 5h4M2 3v4" stroke="#e8e8e8" /></svg>
      <Wifi size={15} strokeWidth={1.500} className="ml-[8px] -rotate-45 text-[#e0e0e0]" />
      <Volume1 size={16} strokeWidth={1.300} className="ml-[8px] text-[#e0e0e0]" />
      <span className="ml-[9px] text-[13px]">中</span>
      <div className="ml-[14px] flex h-[15px] w-[15px] -rotate-6 items-center justify-center rounded-[2px] bg-[#f05a1e] text-[12px] font-bold leading-none">S</div>
      <div className="ml-[8px] flex w-[80px] flex-col items-center text-[12px] leading-[18px] text-[#e8e8e8]">
        <span>15:59</span>
        <span>2017/6/22</span>
      </div>
      <div className="relative mr-[25px] ml-[8px] h-[20px] w-[16px]">
        <svg width="16" height="15" viewBox="0 0 16 15"><path d="M0 0h16v11H6l-3 3v-3H0z" fill="#f4f4f4" /><path d="M3 3h10M3 5.500h10M3 8h7" stroke="#333" /></svg>
        <div className="absolute top-[6px] left-[7px] flex h-[16px] w-[16px] items-center justify-center rounded-full border border-[#888] bg-[#333] text-[11px] font-bold leading-none">7</div>
      </div>
    </div>
  </div>
);

const ImeBar = () => (
  <div className="absolute top-[19px] left-[927px] flex h-[24px] w-[185px] items-center">
    <div className="absolute top-[-3px] left-0 z-10 flex h-[27px] w-[27px] -rotate-12 items-center justify-center rounded-[4px] bg-[#f4511e] text-[22px] leading-none font-bold text-white">S</div>
    <div className="ml-[10px] flex h-[23px] w-[175px] items-center border border-[#b4c4d8] bg-white pl-[24px] text-[#2478c8]">
      <span className="w-[23px] text-[13px] font-bold">英</span>
      <span className="w-[17px] text-[13px] leading-none font-bold">’,</span>
      <Mic size={15} strokeWidth={2.500} />
      <svg width="16" height="12" viewBox="0 0 16 12" className="ml-[10px] shrink-0"><rect width="16" height="12" rx="2" fill="#2478c8" /><path d="M2 3h12M2 6h12M4 9h8" stroke="#fff" strokeDasharray="1.500 1" /></svg>
      <svg width="16" height="14" viewBox="0 0 16 14" className="ml-[8px] shrink-0"><circle cx="6" cy="4" r="3" fill="#aebccb" /><path d="M0 13c0-5 12-5 12 0z" fill="#aebccb" /><rect x="7" y="8" width="9" height="6" fill="#c8d0d8" /></svg>
      <Shirt size={15} fill="#2478c8" strokeWidth={1} className="ml-[5px]" />
      <Wrench size={14} fill="#2478c8" strokeWidth={1.500} className="ml-[7px]" />
    </div>
  </div>
);

const Badge = () => (
  <div className="absolute top-[-30px] left-[1107px] flex h-[48px] w-[48px] items-end justify-center rounded-full border-2 border-[#e8e8e8] bg-[#37b24d] pb-[2px] text-[11px] font-bold text-white shadow-[0_1px_3px_#888]">64</div>
);

export default function App() {
  return (
    <div className="relative flex h-[768px] w-[1366px] flex-col overflow-hidden bg-[#f0f0f0] font-['Liberation_Sans','Noto_Sans_CJK_SC',sans-serif] text-[12px]">
      <TitleBar />
      <MenuBar />
      <ToolBar />
      <div className="flex h-[624px] pt-px">
        <NavPanel />
        <CompPanel />
        <Dialog />
        <div className="flex h-[619px] flex-1 flex-col">
          <div className="h-[28px] bg-[#f4f4f4]" />
          <div className="flex flex-1">
            <div className="flex w-[18px] flex-col justify-end bg-[#f0f0f0] pb-[6px]">
              <ChevronDown size={11} strokeWidth={3} className="mx-auto text-[#666]" />
            </div>
            <div className="flex-1 bg-white" />
          </div>
        </div>
      </div>
      <StatusBar />
      <TaskBar />
      <ImeBar />
      <Badge />
    </div>
  );
}
